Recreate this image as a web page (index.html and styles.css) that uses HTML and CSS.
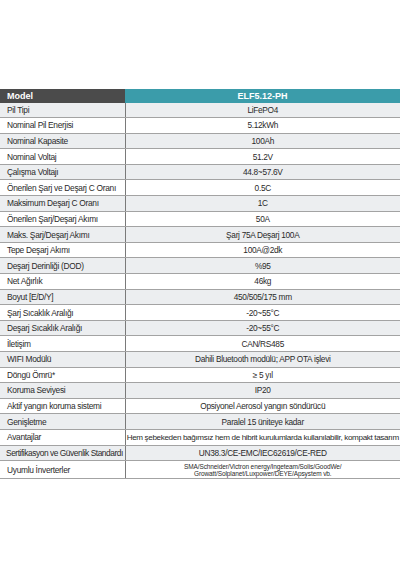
FILE: index.html
```html
<!DOCTYPE html>
<html lang="tr">
<head>
    <meta charset="UTF-8">
    <meta name="viewport" content="width=device-width, initial-scale=1.0">
    <title>ELF5.12-PH Teknik Özellikler</title>
    <link rel="stylesheet" href="styles.css">
</head>
<body>
<div class="sheet">
    <table class="specs">
        <colgroup>
            <col class="col-label">
            <col class="col-value">
        </colgroup>
        <thead>
            <tr>
                <th class="head-label">Model</th>
                <th class="head-value">ELF5.12-PH</th>
            </tr>
        </thead>
        <tbody>
            <tr><td>Pil Tipi</td><td>LiFePO4</td></tr>
            <tr><td>Nominal Pil Enerjisi</td><td>5.12kWh</td></tr>
            <tr><td>Nominal Kapasite</td><td>100Ah</td></tr>
            <tr><td>Nominal Voltaj</td><td>51.2V</td></tr>
            <tr><td>Çalışma Voltajı</td><td>44.8~57.6V</td></tr>
            <tr><td>Önerilen Şarj ve Deşarj C Oranı</td><td>0.5C</td></tr>
            <tr><td>Maksimum Deşarj C Oranı</td><td>1C</td></tr>
            <tr><td>Önerilen Şarj/Deşarj Akımı</td><td>50A</td></tr>
            <tr><td>Maks. Şarj/Deşarj Akımı</td><td>Şarj 75A Deşarj 100A</td></tr>
            <tr><td>Tepe Deşarj Akımı</td><td>100A@2dk</td></tr>
            <tr><td>Deşarj Derinliği (DOD)</td><td>%95</td></tr>
            <tr><td>Net Ağırlık</td><td>46kg</td></tr>
            <tr><td>Boyut [E/D/Y]</td><td>450/505/175 mm</td></tr>
            <tr><td>Şarj Sıcaklık Aralığı</td><td>-20~55°C</td></tr>
            <tr><td>Deşarj Sıcaklık Aralığı</td><td>-20~55°C</td></tr>
            <tr><td>İletişim</td><td>CAN/RS485</td></tr>
            <tr><td>WIFI Modülü</td><td>Dahili Bluetooth modülü; APP OTA işlevi</td></tr>
            <tr><td>Döngü Ömrü*</td><td>≥ 5 yıl</td></tr>
            <tr><td>Koruma Seviyesi</td><td>IP20</td></tr>
            <tr><td>Aktif yangın koruma sistemi</td><td>Opsiyonel Aerosol yangın söndürücü</td></tr>
            <tr><td>Genişletme</td><td>Paralel 15 üniteye kadar</td></tr>
            <tr><td>Avantajlar</td><td class="long">Hem şebekeden bağımsız hem de hibrit kurulumlarda kullanılabilir, kompakt tasarım</td></tr>
            <tr><td class="tight">Sertifikasyon ve Güvenlik Standardı</td><td>UN38.3/CE-EMC/IEC62619/CE-RED</td></tr>
            <tr class="tall">
                <td>Uyumlu İnverterler</td>
                <td class="small">SMA/Schneider/Victron energy/Ingeteam/Solis/GoodWe/<br>Growatt/Solplanet/Luxpower/DEYE/Apsystem vb.</td>
            </tr>
        </tbody>
    </table>
</div>
</body>
</html>
```

FILE: styles.css
```css
body {
    margin: 0;
    padding: 0;
    background-color: #fff;
    font-family: "Liberation Sans", Arial, sans-serif;
    color: #2a2a2a;
}
.sheet {
    padding-top: 89px;
}
.specs {
    width: 400px;
    border-collapse: collapse;
    table-layout: fixed;
    font-size: 8.3px;
    letter-spacing: -0.3px;
}
.col-label {
    width: 125px;
}
.specs th {
    height: 13.5px;
    padding: 0 7px;
    color: #fff;
    font-weight: bold;
    font-size: 9px;
    letter-spacing: 0;
}
.head-label {
    background-color: #4b4b4b;
    text-align: left;
}
.head-value {
    background-color: #3b9caa;
    text-align: center;
}
.specs td {
    height: 14.6px;
    padding: 0 4px;
    border-bottom: 1px solid #a3a3a3;
    white-space: nowrap;
    overflow: hidden;
    text-align: center;
}
.specs td:first-child {
    padding: 0 0 0 7px;
    font-size: 8.4px;
    letter-spacing: -0.3px;
    text-align: left;
    border-right: 1px solid #7a7a7a;
}
.specs td.tight {
    padding-left: 6px;
    letter-spacing: -0.45px;
}
.specs tbody tr:nth-child(odd) {
    background-color: #eceef0;
}
.specs td.long {
    padding: 0;
    font-size: 8.1px;
    letter-spacing: -0.35px;
}
.specs tr.tall td {
    height: 17px;
}
.specs td.small {
    font-size: 6.5px;
    line-height: 7px;
    letter-spacing: -0.1px;
}
```
